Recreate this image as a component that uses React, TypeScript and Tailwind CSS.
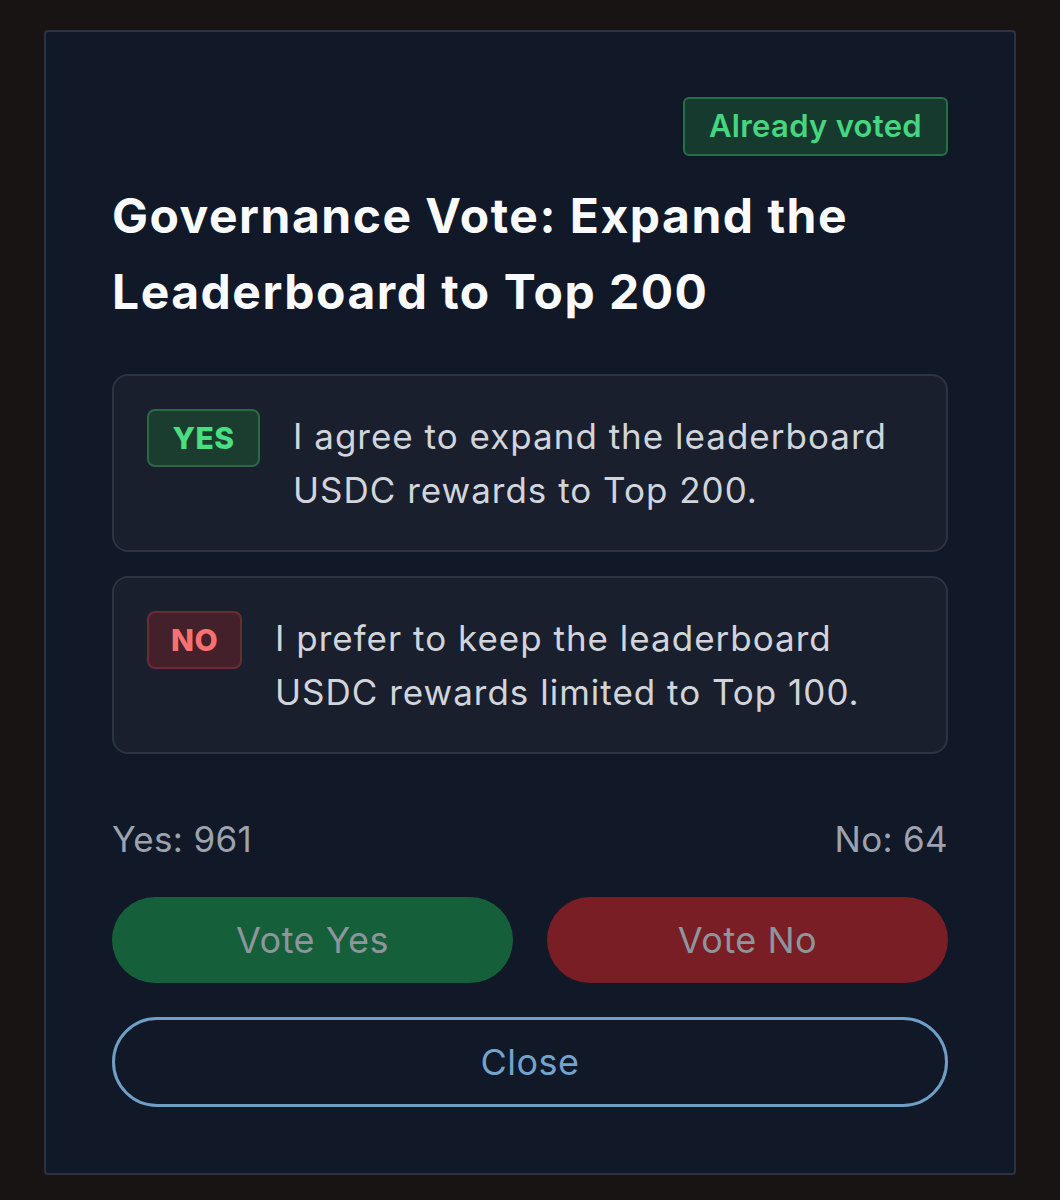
import React from "react";

export default function App() {
  return (
    <div className="min-h-[1200px] w-[1060px] bg-[#171413] px-[44px] pt-[30px] pb-[26px]" style={{ fontFamily: "Inter, 'Noto Sans', sans-serif" }}>
      <div className="rounded-[4px] border-2 border-[#2a3343] bg-[#111827] px-[66px] pt-[65px] pb-[66px]">
        <div className="flex justify-end">
          <span className="rounded-[6px] border-2 border-[#267048] bg-[#173a2f] px-[24px] h-[59px] flex items-center text-[31px] font-semibold tracking-[0.3px] text-[#46d67f]">
            Already voted
          </span>
        </div>
        <h1 className="mt-[22px] text-[48px] font-bold leading-[76px] tracking-[1.5px] text-[#f9fafb]">
          Governance Vote: Expand the Leaderboard to Top 200
        </h1>
        <div className="mt-[44px] flex flex-col gap-[24px]">
          <div className="flex items-start gap-[33px] rounded-[16px] border-2 border-[#2c3443] bg-[#1a1f2e] p-[33px]">
            <span className="flex h-[58px] w-[113px] shrink-0 items-center justify-center rounded-[8px] border-2 border-[#2a6a45] bg-[#1b3d2f] text-[30px] font-extrabold tracking-[0.5px] text-[#4ade80]">
              YES
            </span>
            <p className="text-[35px] leading-[54px] tracking-[1px] text-[#d1d5db]">
              I agree to expand the leaderboard USDC rewards to Top 200.
            </p>
          </div>
          <div className="flex items-start gap-[33px] rounded-[16px] border-2 border-[#2c3443] bg-[#1a1f2e] p-[33px]">
            <span className="flex h-[58px] w-[95px] shrink-0 items-center justify-center rounded-[8px] border-2 border-[#6b2b33] bg-[#44212a] text-[30px] font-extrabold tracking-[0.5px] text-[#f87171]">
              NO
            </span>
            <p className="text-[35px] leading-[54px] tracking-[1px] text-[#d1d5db]">
              I prefer to keep the leaderboard USDC rewards limited to Top 100.
            </p>
          </div>
        </div>
        <div className="mt-[61px] flex justify-between text-[35px] leading-[48px] tracking-[0.3px] text-[#9ca3af]">
          <span>Yes: 961</span>
          <span>No: 64</span>
        </div>
        <div className="mt-[34px] grid grid-cols-2 gap-[34px]">
          <button className="h-[86px] rounded-full bg-[#15603a] text-[36px] tracking-[0.5px] text-[#8e959c]">Vote Yes</button>
          <button className="h-[86px] rounded-full bg-[#7a1e25] text-[36px] tracking-[0.5px] text-[#8e959c]">Vote No</button>
        </div>
        <button className="mt-[34px] h-[90px] w-full rounded-full border-[3px] border-[#6f9ec6] text-[36px] tracking-[0.5px] text-[#74a3cb]">
          Close
        </button>
      </div>
    </div>
  );
}
